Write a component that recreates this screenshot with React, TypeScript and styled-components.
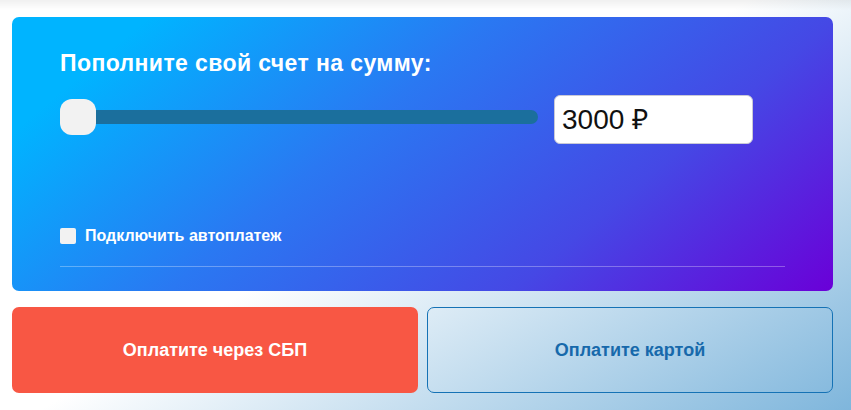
import styled, { createGlobalStyle } from 'styled-components'

const GlobalStyle = createGlobalStyle`
  html, body {
    margin: 0;
    padding: 0;
  }
  body {
    font-family: "Liberation Sans", Arial, sans-serif;
    min-height: 410px;
    background: linear-gradient(150deg, #ffffff 48%, #7fb6dc 100%);
  }
`

const Page = styled.div`
  width: 851px;
  height: 410px;
  overflow: hidden;
`

const HeaderShadow = styled.div`
  height: 10px;
  background: linear-gradient(to bottom, rgba(0, 0, 0, 0.06), rgba(0, 0, 0, 0));
`

const Content = styled.main`
  width: 821px;
  padding: 7px 0 0 12px;
  display: flex;
  flex-direction: column;
  gap: 16px;
`

const TopUpCard = styled.section`
  height: 274px;
  box-sizing: border-box;
  border-radius: 7px;
  padding: 34px 48px 0 48px;
  background: linear-gradient(140deg, #00b4ff 12%, #2a78f2 42%, #4548e5 72%, #6a00d8 100%);
  color: white;
  display: flex;
  flex-direction: column;
`

const Title = styled.h2`
  margin: 0;
  font-size: 23px;
  font-weight: bold;
  line-height: 24px;
  letter-spacing: 0.4px;
`

const AmountRow = styled.div`
  display: flex;
  align-items: flex-start;
  margin-top: 20px;
  gap: 16px;
`

const Slider = styled.div`
  width: 478px;
  height: 36px;
  margin-top: 4px;
  display: flex;
  align-items: center;
`

const Thumb = styled.div`
  width: 36px;
  height: 36px;
  border-radius: 12px;
  background: #f2f2f2;
  flex-shrink: 0;
`

const Track = styled.div`
  flex: 1;
  height: 14px;
  background: #1b6f9d;
  border-radius: 0 7px 7px 0;
`

const AmountInput = styled.div`
  width: 199px;
  height: 49px;
  box-sizing: border-box;
  background: white;
  border: 1px solid #c9c9d6;
  border-radius: 6px;
  color: #111;
  font-size: 28px;
  line-height: 47px;
  padding-left: 7px;
`

const AutoPay = styled.label`
  display: flex;
  align-items: center;
  gap: 9px;
  margin-top: 83px;
  font-size: 16px;
  line-height: 18px;
  font-weight: bold;
`

const Checkbox = styled.span`
  width: 16px;
  height: 16px;
  border-radius: 2px;
  background: #f2f2f2;
`

const Divider = styled.hr`
  margin: 21px 0 0 0;
  width: 725px;
  border: none;
  border-top: 1px solid rgba(255, 255, 255, 0.3);
`

const ButtonRow = styled.div`
  display: grid;
  grid-template-columns: 1fr 1fr;
  gap: 9px;
`

const PayButton = styled.button<{ $primary?: boolean }>`
  padding: 0;
  height: 86px;
  box-sizing: border-box;
  border-radius: 7px;
  font-family: "Liberation Sans", Arial, sans-serif;
  font-size: 18px;
  font-weight: bold;
  cursor: pointer;
  background: ${p => (p.$primary ? '#f85744' : 'transparent')};
  color: ${p => (p.$primary ? '#ffffff' : '#1769ab')};
  border: ${p => (p.$primary ? 'none' : '1px solid #1572b5')};
`

export default function App() {
  return (
    <Page>
      <GlobalStyle />
      <HeaderShadow />
      <Content>
        <TopUpCard>
          <Title>Пополните свой счет на сумму:</Title>
          <AmountRow>
            <Slider>
              <Thumb />
              <Track />
            </Slider>
            <AmountInput>3000 ₽</AmountInput>
          </AmountRow>
          <AutoPay>
            <Checkbox />
            Подключить автоплатеж
          </AutoPay>
          <Divider />
        </TopUpCard>
        <ButtonRow>
          <PayButton $primary>Оплатите через СБП</PayButton>
          <PayButton>Оплатите картой</PayButton>
        </ButtonRow>
      </Content>
    </Page>
  )
}
